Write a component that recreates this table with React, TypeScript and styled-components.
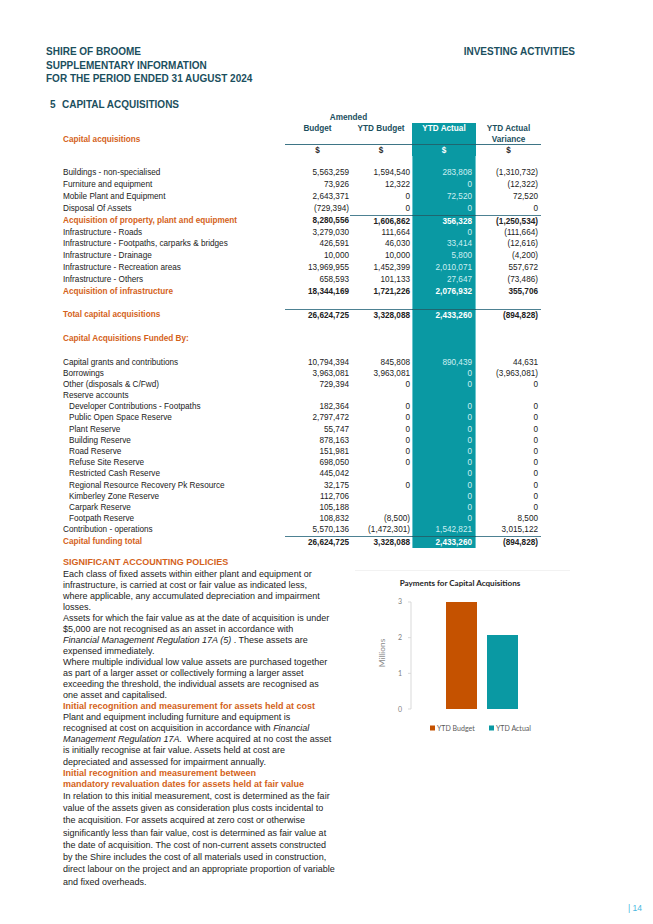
import React from "react";
import styled, { createGlobalStyle, css } from "styled-components";

const TEAL = "#0a99a3";
const ORANGE = "#d4621a";
const NAVY = "#1b4f5e";
const COLS = "222px 65px 62px 64px 65px";
const PADS = [1, 2, 4, 3];

const Global = createGlobalStyle`
  html, body { margin: 0; padding: 0; background: #fff; }
  body { font-family: "Liberation Sans", Arial, sans-serif; color: #222; }
`;

const Page = styled.div`
  width: 653px;
  height: 924px;
  box-sizing: border-box;
  display: flex;
  flex-direction: column;
  overflow: hidden;
`;

const Content = styled.div`
  padding: 45px 78px 0 46px;
  display: flex;
  flex-direction: column;
`;

const Header = styled.header`
  display: flex;
  justify-content: space-between;
  align-items: flex-start;
  color: ${NAVY};
  font-weight: 700;
  font-size: 10px;
  line-height: 13.5px;
`;

const HeaderLines = styled.div`
  display: flex;
  flex-direction: column;
`;

const SectionTitle = styled.h2`
  margin: 13px 0 0 4px;
  font-size: 10px;
  line-height: 12px;
  color: ${NAVY};
  font-weight: 700;
  display: flex;
`;

const SectionNum = styled.span`
  width: 12px;
`;

const Table = styled.div`
  margin-top: 1px;
  padding-left: 17px;
  display: flex;
  flex-direction: column;
  font-size: 8.2px;
`;

const Row = styled.div<{ $h: number }>`
  display: grid;
  grid-template-columns: ${COLS};
  height: ${(p) => p.$h}px;
  line-height: ${(p) => p.$h}px;
  white-space: nowrap;
`;

const Amended = styled.div`
  grid-column: 2 / 4;
  text-align: center;
  font-weight: 700;
  color: ${NAVY};
  line-height: 11px;
`;

const HeadLabel = styled.div`
  align-self: end;
  line-height: 11px;
  color: ${ORANGE};
  font-weight: 700;
`;

const HeadCell = styled.div<{ $band?: boolean }>`
  box-sizing: border-box;
  height: 22px;
  text-align: center;
  line-height: 11px;
  font-weight: 700;
  color: ${(p) => (p.$band ? "#ffffff" : NAVY)};
  background: ${(p) => (p.$band ? TEAL : "transparent")};
  border-bottom: 1px solid ${(p) => (p.$band ? "#1f6670" : "#3e7586")};
`;

const DollarCell = styled.div<{ $band?: boolean }>`
  text-align: center;
  font-weight: 700;
  line-height: 11px;
  color: ${(p) => (p.$band ? "#ffffff" : "#2a2a2a")};
  background: ${(p) => (p.$band ? TEAL : "transparent")};
`;

const Label = styled.div<{ $accent?: boolean; $indent?: boolean }>`
  padding-left: ${(p) => (p.$indent ? 6 : 0)}px;
  color: ${(p) => (p.$accent ? ORANGE : "#222")};
  font-weight: ${(p) => (p.$accent ? 700 : 400)};
`;

const Num = styled.div<{ $band?: boolean; $bold?: boolean; $line?: boolean; $pad: number }>`
  box-sizing: border-box;
  text-align: right;
  padding-right: ${(p) => p.$pad}px;
  font-weight: ${(p) => (p.$bold ? 700 : 400)};
  color: #222;
  ${(p) =>
    p.$line &&
    css`
      border-top: 1px solid #4d8192;
    `}
  ${(p) =>
    p.$band &&
    css`
      background: ${TEAL};
      color: ${p.$bold ? "#ffffff" : "#cdeff2"};
      box-shadow: inset 1px 0 #6cc6cd, inset -1px 0 #6cc6cd;
      border-top-color: #1f6670;
    `}
`;

type Line = "partial" | "full" | undefined;
type DataRow = {
  label?: string;
  v?: (string | undefined)[];
  accent?: boolean;
  indent?: boolean;
  line?: Line;
};

const top: DataRow[] = [
  {},
  { label: "Buildings - non-specialised", v: ["5,563,259", "1,594,540", "283,808", "(1,310,732)"] },
  { label: "Furniture and equipment", v: ["73,926", "12,322", "0", "(12,322)"] },
  { label: "Mobile Plant and Equipment", v: ["2,643,371", "0", "72,520", "72,520"] },
  { label: "Disposal Of Assets", v: ["(729,394)", "0", "0", "0"] },
  { label: "Acquisition of property, plant and equipment", v: ["8,280,556", "1,606,862", "356,328", "(1,250,534)"], accent: true, line: "partial" },
  { label: "Infrastructure - Roads", v: ["3,279,030", "111,664", "0", "(111,664)"] },
  { label: "Infrastructure - Footpaths, carparks & bridges", v: ["426,591", "46,030", "33,414", "(12,616)"] },
  { label: "Infrastructure - Drainage", v: ["10,000", "10,000", "5,800", "(4,200)"] },
  { label: "Infrastructure - Recreation areas", v: ["13,969,955", "1,452,399", "2,010,071", "557,672"] },
  { label: "Infrastructure - Others", v: ["658,593", "101,133", "27,647", "(73,486)"] },
  { label: "Acquisition of infrastructure", v: ["18,344,169", "1,721,226", "2,076,932", "355,706"], accent: true },
  {},
  { label: "Total capital acquisitions", v: ["26,624,725", "3,328,088", "2,433,260", "(894,828)"], accent: true, line: "full" },
  {},
  { label: "Capital Acquisitions Funded By:", accent: true },
];

const lower: DataRow[] = [
  { label: "Capital grants and contributions", v: ["10,794,394", "845,808", "890,439", "44,631"] },
  { label: "Borrowings", v: ["3,963,081", "3,963,081", "0", "(3,963,081)"] },
  { label: "Other (disposals & C/Fwd)", v: ["729,394", "0", "0", "0"] },
  { label: "Reserve accounts" },
  { label: "Developer Contributions - Footpaths", v: ["182,364", "0", "0", "0"], indent: true },
  { label: "Public Open Space Reserve", v: ["2,797,472", "0", "0", "0"], indent: true },
  { label: "Plant Reserve", v: ["55,747", "0", "0", "0"], indent: true },
  { label: "Building Reserve", v: ["878,163", "0", "0", "0"], indent: true },
  { label: "Road Reserve", v: ["151,981", "0", "0", "0"], indent: true },
  { label: "Refuse Site Reserve", v: ["698,050", "0", "0", "0"], indent: true },
  { label: "Restricted Cash Reserve", v: ["445,042", "", "0", "0"], indent: true },
  { label: "Regional Resource Recovery Pk Resource", v: ["32,175", "0", "0", "0"], indent: true },
  { label: "Kimberley Zone Reserve", v: ["112,706", "", "0", "0"], indent: true },
  { label: "Carpark Reserve", v: ["105,188", "", "0", "0"], indent: true },
  { label: "Footpath Reserve", v: ["108,832", "(8,500)", "0", "8,500"], indent: true },
  { label: "Contribution - operations", v: ["5,570,136", "(1,472,301)", "1,542,821", "3,015,122"] },
  { label: "Capital funding total", v: ["26,624,725", "3,328,088", "2,433,260", "(894,828)"], accent: true, line: "full" },
];

const renderRow = (r: DataRow, h: number, key: string) => (
  <Row $h={h} key={key}>
    <Label $accent={r.accent} $indent={r.indent}>{r.label}</Label>
    {[0, 1, 2, 3].map((i) => (
      <Num
        key={i}
        $pad={PADS[i]}
        $band={i === 2}
        $bold={r.accent}
        $line={r.line === "full" || (r.line === "partial" && i >= 1)}
      >
        {r.v ? r.v[i] : ""}
      </Num>
    ))}
  </Row>
);

const Bottom = styled.div`
  margin-top: 10px;
  display: flex;
  padding-left: 17px;
`;

const TextCol = styled.div`
  width: 277px;
  flex: none;
  display: flex;
  flex-direction: column;
  font-size: 9px;
  line-height: 11.05px;
  color: #222;
  white-space: nowrap;
`;

const PolicyTitle = styled.div`
  color: ${ORANGE};
  font-weight: 700;
  margin-bottom: 1px;
`;

const SubHead = styled.div`
  color: ${ORANGE};
  font-weight: 700;
`;

const Ln = styled.div``;

const LooseLines = styled.div`
  display: flex;
  flex-direction: column;
  line-height: 12.3px;
`;

const ChartWrap = styled.div`
  margin-top: 8px;
  flex: none;
`;

const Footer = styled.div`
  margin-top: auto;
  display: flex;
  justify-content: flex-end;
  padding: 0 11px 11px 0;
  font-size: 8.5px;
  line-height: 10px;
  color: #4bb8e0;
`;

const Chart = () => {
  const y0 = 144;
  const step = 35.67;
  return (
    <svg width="260" height="180" viewBox="0 0 260 180" fontFamily="Lato, 'Open Sans', sans-serif">
      <line x1="15" y1="5.5" x2="230" y2="5.5" stroke="#f2f2f2" />
      <text x="120" y="21" textAnchor="middle" fontWeight="700" fontSize="8.1" fill="#262626">
        Payments for Capital Acquisitions
      </text>
      <line x1="71" y1="37" x2="71" y2={y0} stroke="#d9d9d9" strokeWidth="1" />
      {[0, 1, 2, 3].map((v) => (
        <g key={v}>
          <line x1="68" y1={y0 - v * step} x2="71" y2={y0 - v * step} stroke="#d9d9d9" />
          <text x="62" y={y0 - v * step + 2.5} textAnchor="end" fontSize="7" fill="#7f7f7f">
            {v}
          </text>
        </g>
      ))}
      <text transform="translate(45,88) rotate(-90)" textAnchor="middle" fontSize="8.3" fill="#8c8c8c">
        Millions
      </text>
      <rect x="106" y="37" width="31" height={y0 - 37} fill="#c55200" />
      <rect x="147" y="70" width="31" height={y0 - 70} fill={TEAL} />
      <rect x="90" y="160.5" width="5" height="5" fill="#c55200" />
      <text x="97" y="165.5" fontSize="7" fill="#595959">YTD Budget</text>
      <rect x="149" y="160.5" width="5" height="5" fill={TEAL} />
      <text x="156" y="165.5" fontSize="7" fill="#595959">YTD Actual</text>
    </svg>
  );
};

export default function App() {
  return (
    <Page>
      <Global />
      <Content>
        <Header>
          <HeaderLines>
            <span>SHIRE OF BROOME</span>
            <span>SUPPLEMENTARY INFORMATION</span>
            <span>FOR THE PERIOD ENDED 31 AUGUST 2024</span>
          </HeaderLines>
          <span>INVESTING ACTIVITIES</span>
        </Header>
        <SectionTitle>
          <SectionNum>5</SectionNum>
          <span>CAPITAL ACQUISITIONS</span>
        </SectionTitle>
        <Table>
          <Row $h={11}>
            <div />
            <Amended>Amended</Amended>
          </Row>
          <Row $h={22}>
            <HeadLabel>Capital acquisitions</HeadLabel>
            <HeadCell>Budget</HeadCell>
            <HeadCell>YTD Budget</HeadCell>
            <HeadCell $band>YTD Actual</HeadCell>
            <HeadCell>
              YTD Actual
              <br />
              Variance
            </HeadCell>
          </Row>
          <Row $h={11}>
            <div />
            <DollarCell>$</DollarCell>
            <DollarCell>$</DollarCell>
            <DollarCell $band>$</DollarCell>
            <DollarCell>$</DollarCell>
          </Row>
          {top.map((r, i) => renderRow(r, 11.85, "t" + i))}
          {renderRow({}, 11.5, "gap")}
          {lower.map((r, i) => renderRow(r, 11.2, "l" + i))}
        </Table>
        <Bottom>
          <TextCol>
            <PolicyTitle>SIGNIFICANT ACCOUNTING POLICIES</PolicyTitle>
            <Ln>Each class of fixed assets within either plant and equipment or</Ln>
            <Ln>infrastructure, is carried at cost or fair value as indicated less,</Ln>
            <Ln>where applicable, any accumulated depreciation and impairment</Ln>
            <Ln>losses.</Ln>
            <Ln>Assets for which the fair value as at the date of acquisition is under</Ln>
            <Ln>$5,000 are not recognised as an asset in accordance with</Ln>
            <Ln>
              <i>Financial Management Regulation 17A (5)</i> . These assets are
            </Ln>
            <Ln>expensed immediately.</Ln>
            <Ln>Where multiple individual low value assets are purchased together</Ln>
            <Ln>as part of a larger asset or collectively forming a larger asset</Ln>
            <Ln>exceeding the threshold, the individual assets are recognised as</Ln>
            <Ln>one asset and capitalised.</Ln>
            <SubHead>Initial recognition and measurement for assets held at cost</SubHead>
            <Ln>Plant and equipment including furniture and equipment is</Ln>
            <Ln>
              recognised at cost on acquisition in accordance with <i>Financial</i>
            </Ln>
            <Ln>
              <i>Management Regulation 17A.</i>&nbsp; Where acquired at no cost the asset
            </Ln>
            <Ln>is initially recognise at fair value. Assets held at cost are</Ln>
            <Ln>depreciated and assessed for impairment annually.</Ln>
            <SubHead>Initial recognition and measurement between</SubHead>
            <SubHead>mandatory revaluation dates for assets held at fair value</SubHead>
            <LooseLines>
              <Ln>In relation to this initial measurement, cost is determined as the fair</Ln>
              <Ln>value of the assets given as consideration plus costs incidental to</Ln>
              <Ln>the acquisition. For assets acquired at zero cost or otherwise</Ln>
              <Ln>significantly less than fair value, cost is determined as fair value at</Ln>
              <Ln>the date of acquisition. The cost of non-current assets constructed</Ln>
              <Ln>by the Shire includes the cost of all materials used in construction,</Ln>
              <Ln>direct labour on the project and an appropriate proportion of variable</Ln>
              <Ln>and fixed overheads.</Ln>
            </LooseLines>
          </TextCol>
          <ChartWrap>
            <Chart />
          </ChartWrap>
        </Bottom>
      </Content>
      <Footer>| 14</Footer>
    </Page>
  );
}
